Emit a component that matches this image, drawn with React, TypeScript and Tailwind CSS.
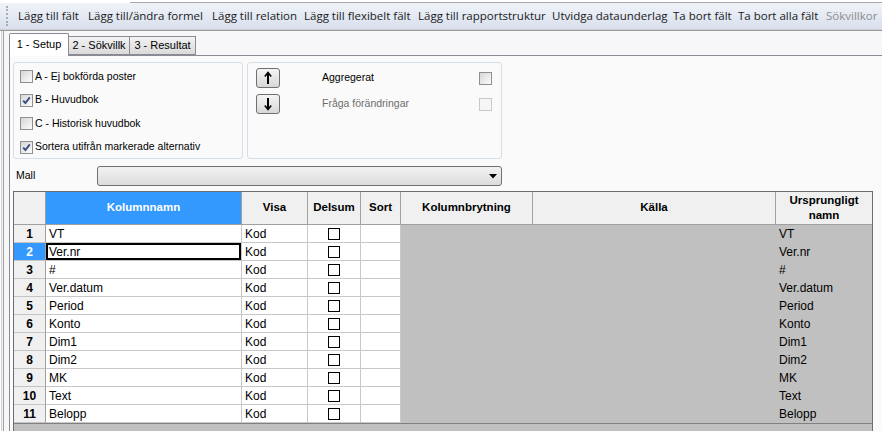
import clsx from "clsx";

const toolbarItems = [
  { label: "Lägg till fält", w: "w-[70px]" },
  { label: "Lägg till/ändra formel", w: "w-[124px]" },
  { label: "Lägg till relation", w: "w-[92px]" },
  { label: "Lägg till flexibelt fält", w: "w-[114px]" },
  { label: "Lägg till rapportstruktur", w: "w-[134px]" },
  { label: "Utvidga dataunderlag", w: "w-[121px]" },
  { label: "Ta bort fält", w: "w-[65px]" },
  { label: "Ta bort alla fält", w: "w-[88px]" },
];

const rows = ["VT", "Ver.nr", "#", "Ver.datum", "Period", "Konto", "Dim1", "Dim2", "MK", "Text", "Belopp"];

function WinCheck({ checked, disabled }: { checked?: boolean; disabled?: boolean }) {
  return (
    <span
      className={clsx(
        "inline-flex h-[13px] w-[13px] shrink-0 items-center justify-center border",
        disabled
          ? "border-[#c9c9c9] bg-[#f6f6f6]"
          : "border-[#8e8f8f] bg-linear-to-br from-[#d6d6d6] to-[#fcfcfc]"
      )}
    >
      {checked && (
        <svg width="11" height="11" viewBox="0 0 11 11">
          <path d="M2.2 5.6 L4.4 8 L8.8 2.4" fill="none" stroke="#3d4f82" strokeWidth="1.9" />
        </svg>
      )}
    </span>
  );
}

function ArrowButton({ down }: { down?: boolean }) {
  return (
    <button className="flex h-[20px] w-[24px] items-center justify-center rounded-[3px] border border-[#707070] bg-linear-to-b from-[#f4f4f4] to-[#d8d8d8]">
      <svg width="10" height="14" viewBox="0 0 10 14" className={clsx(down && "rotate-180")}>
        <path d="M5 2 V13" stroke="#000" strokeWidth="2" />
        <path d="M1.8 5.4 L5 1.6 L8.2 5.4" fill="none" stroke="#000" strokeWidth="1.6" />
      </svg>
    </button>
  );
}

const headCell =
  "flex items-center justify-center border-r border-b border-[#a0a0a0] text-[11.5px] font-bold";

const cell = "flex h-[18px] items-center overflow-hidden leading-[16px]";

export default function App() {
  return (
    <div className="flex h-[431px] w-[882px] flex-col overflow-hidden bg-white font-['Liberation_Sans',Arial,sans-serif] text-black">
      {/* top strip */}
      <div className="h-[3px] shrink-0 border-t-[2px] border-white">
        <div className="ml-[130px] h-[1px] bg-[#a8a8a8]" />
      </div>

      {/* toolbar */}
      <div className="flex h-[26px] shrink-0 items-center bg-linear-to-b from-[#f0f3f9] to-[#d9e0ec] pl-[6px] font-['Open_Sans',sans-serif] text-[11.5px] text-[#1b1b1b]">
        <div className="h-[20px] w-[2px] border-l-2 border-dotted border-[#a6adbb]" />
        <div className="ml-[10px] flex items-center">
          {toolbarItems.map((t) => (
            <span key={t.label} className={clsx("whitespace-nowrap", t.w)}>
              {t.label}
            </span>
          ))}
          <span className="whitespace-nowrap text-[#8d8d8d]">Sökvillkor</span>
        </div>
      </div>
      <div className="h-[2px] shrink-0 border-t border-[#c9ced8] bg-[#9a9a9a]" />

      {/* main */}
      <div className="flex min-h-0 flex-1">
        <div className="w-[1px] bg-white" />
        <div className="w-[1px] bg-[#d0d0d0]" />
        <div className="w-[1px] bg-[#f4f4f4]" />
        <div className="w-[1px] bg-[#a0a0a0]" />
        <div className="flex flex-1 flex-col bg-[#f7f7f9] pl-[5px] pt-[2px]">
          {/* tabs */}
          <div className="flex h-[22px] items-end text-[11px]">
            <div className="relative z-10 -mb-px flex h-[23px] w-[60px] items-center justify-center rounded-t-[2px] border border-b-0 border-[#898c95] bg-white pb-[2px]">
              1 - Setup
            </div>
            <div className="flex h-[19px] w-[61px] items-center justify-center border border-l-0 border-[#898c95] bg-linear-to-b from-[#f3f3f3] to-[#dadada]">
              2 - Sökvillk
            </div>
            <div className="flex h-[19px] w-[66px] items-center justify-center border border-l-0 border-[#898c95] bg-linear-to-b from-[#f3f3f3] to-[#dadada]">
              3 - Resultat
            </div>
          </div>

          {/* panel */}
          <div className="flex flex-1 flex-col border-l border-t border-[#898c95] bg-[#fafafa] pl-[3px] pt-[6px]">
            <div className="flex gap-[4px] text-[10.5px]">
              <div className="h-[97px] w-[230px] rounded-[3px] border border-[#d5dfe5] pl-[6px] pt-[2px]">
                {[
                  { label: "A - Ej bokförda poster", checked: false },
                  { label: "B - Huvudbok", checked: true },
                  { label: "C - Historisk huvudbok", checked: false },
                  { label: "Sortera utifrån markerade alternativ", checked: true },
                ].map((c) => (
                  <div key={c.label} className="flex h-[23.5px] items-center gap-[2px]">
                    <WinCheck checked={c.checked} />
                    <span>{c.label}</span>
                  </div>
                ))}
              </div>
              <div className="h-[97px] w-[255px] rounded-[3px] border border-[#d5dfe5] pl-[8px] pt-[5px]">
                <div className="flex h-[20px] items-center">
                  <ArrowButton />
                  <span className="ml-[42px] w-[157px]">Aggregerat</span>
                  <WinCheck />
                </div>
                <div className="mt-[6px] flex h-[20px] items-center">
                  <ArrowButton down />
                  <span className="ml-[42px] w-[157px] text-[#6d6d6d]">Fråga förändringar</span>
                  <WinCheck disabled />
                </div>
              </div>
            </div>

            {/* Mall */}
            <div className="mt-[7px] flex h-[20px] items-center text-[10.5px]">
              <span className="w-[84px] pl-[3px]">Mall</span>
              <div className="flex h-[20px] w-[405px] items-center justify-end rounded-[3px] border border-[#707070] bg-linear-to-b from-[#f2f2f2] to-[#dcdcdc] pr-[4px]">
                <svg width="8" height="5" viewBox="0 0 8 5">
                  <path d="M0 0 H8 L4 4.5 Z" fill="#000" />
                </svg>
              </div>
            </div>

            {/* grid */}
            <div className="mt-[5px] w-[860px] border-x border-t border-[#6e6e6e] bg-[#c0c0c0]">
              <div className="grid grid-cols-[32px_196px_66px_53px_40px_132px_243px_96px]">
                <div className={clsx(headCell, "h-[33px] bg-[#f0f0f0]")} />
                <div className={clsx(headCell, "bg-[#3399ff] text-white")}>Kolumnnamn</div>
                <div className={clsx(headCell, "bg-[#f0f0f0]")}>Visa</div>
                <div className={clsx(headCell, "bg-[#f0f0f0]")}>Delsum</div>
                <div className={clsx(headCell, "bg-[#f0f0f0]")}>Sort</div>
                <div className={clsx(headCell, "bg-[#f0f0f0]")}>Kolumnbrytning</div>
                <div className={clsx(headCell, "bg-[#f0f0f0]")}>Källa</div>
                <div className={clsx(headCell, "border-r-0 bg-[#f0f0f0] text-center leading-[15px]")}>
                  Ursprungligt
                  <br />
                  namn
                </div>

                {rows.map((name, i) => {
                  const selected = i === 1;
                  return (
                    <div key={name} className="contents text-[12px]">
                      <div
                        className={clsx(
                          cell,
                          "justify-center border-r border-b border-r-[#a0a0a0] border-b-[#c4c4c4] font-bold",
                          selected ? "bg-[#3399ff] text-white" : "bg-[#f0f0f0]"
                        )}
                      >
                        {i + 1}
                      </div>
                      <div
                        className={clsx(
                          cell,
                          "border-r border-b border-[#c8c8c8] bg-white pl-[3px]",
                          selected && "shadow-[inset_0_0_0_2px_#000]"
                        )}
                      >
                        {name}
                      </div>
                      <div className={clsx(cell, "border-r border-b border-[#c8c8c8] bg-white pl-[3px]")}>Kod</div>
                      <div className={clsx(cell, "justify-center border-r border-b border-[#c8c8c8] bg-white")}>
                        <span className="h-[12px] w-[12px] border-[1.5px] border-black bg-white" />
                      </div>
                      <div className={clsx(cell, "border-r border-b border-[#c8c8c8] bg-white")} />
                      <div className={clsx(cell, "col-span-2 bg-[#c0c0c0]")} />
                      <div className={clsx(cell, "bg-[#c0c0c0] pl-[3px]")}>{name}</div>
                    </div>
                  );
                })}
              </div>
              <div className="h-[12px] border-t border-[#808080] bg-[#c0c0c0]" />
            </div>
          </div>
        </div>
      </div>
    </div>
  );
}
